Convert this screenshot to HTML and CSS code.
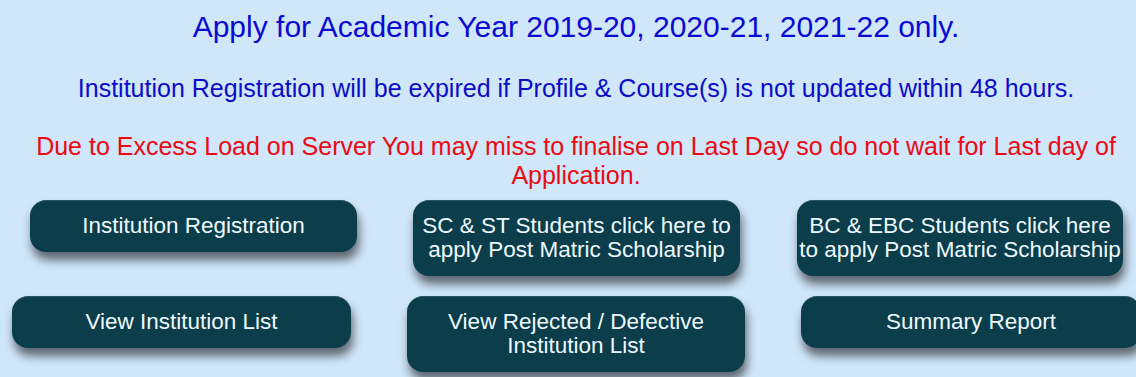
FILE: index.html
```html
<!DOCTYPE html>
<html>
<head>
<meta charset="utf-8">
<link rel="stylesheet" href="styles.css">
</head>
<body>
<div class="page">
  <h1 class="title">Apply for Academic Year 2019-20, 2020-21, 2021-22 only.</h1>
  <p class="notice">Institution Registration will be expired if Profile &amp; Course(s) is not updated within 48 hours.</p>
  <p class="warning">Due to Excess Load on Server You may miss to finalise on Last Day so do not wait for Last day of Application.</p>
  <div class="row row-one">
    <a class="btn">Institution Registration</a>
    <a class="btn">SC &amp; ST Students click here to<br>apply Post Matric Scholarship</a>
    <a class="btn">BC &amp; EBC Students click here<br>to apply Post Matric Scholarship</a>
  </div>
  <div class="row row-two">
    <a class="btn">View Institution List</a>
    <a class="btn">View Rejected / Defective<br>Institution List</a>
    <a class="btn">Summary Report</a>
  </div>
</div>
</body>
</html>
```

FILE: styles.css
```css
html, body {
  margin: 0;
  padding: 0;
  background: #d0e6f9;
  overflow: hidden;
}
body {
  font-family: "Liberation Sans", Arial, sans-serif;
  width: 1136px;
  height: 377px;
}
.page {
  display: flex;
  flex-direction: column;
  padding-top: 10px;
}
.title,
.notice,
.warning {
  padding-left: 16px;
  text-align: center;
}
.title {
  margin: 0;
  font-weight: normal;
  font-size: 30px;
  line-height: 34px;
  color: #0a0ad2;
}
.notice {
  margin: 29px 0 0;
  font-size: 25px;
  line-height: 30px;
  color: #0c0cc8;
}
.warning {
  margin: 29px 0 0;
  padding-right: 0;
  font-size: 25px;
  line-height: 29px;
  color: #ea0a14;
}
.row {
  display: grid;
  align-items: start;
}
.row-one {
  margin-top: 10px;
  grid-template-columns: 327px 327px 327px;
  column-gap: 56px;
  padding-left: 30px;
}
.row-two {
  margin-top: 20px;
  grid-template-columns: 339px 338px 340px;
  column-gap: 56px;
  padding-left: 12px;
}
.btn {
  display: block;
  padding: 13px 0 14px;
  box-sizing: border-box;
  background: #0b3d4b;
  color: #eef9ff;
  font-size: 22.5px;
  line-height: 24px;
  text-align: center;
  white-space: nowrap;
  border-radius: 16px;
  border-top: 1px solid #2a5866;
  box-shadow: 2px 8px 10px rgba(0, 0, 0, 0.55);
}
.row-one .btn:nth-child(3) {
  margin-left: 1px;
}
```
